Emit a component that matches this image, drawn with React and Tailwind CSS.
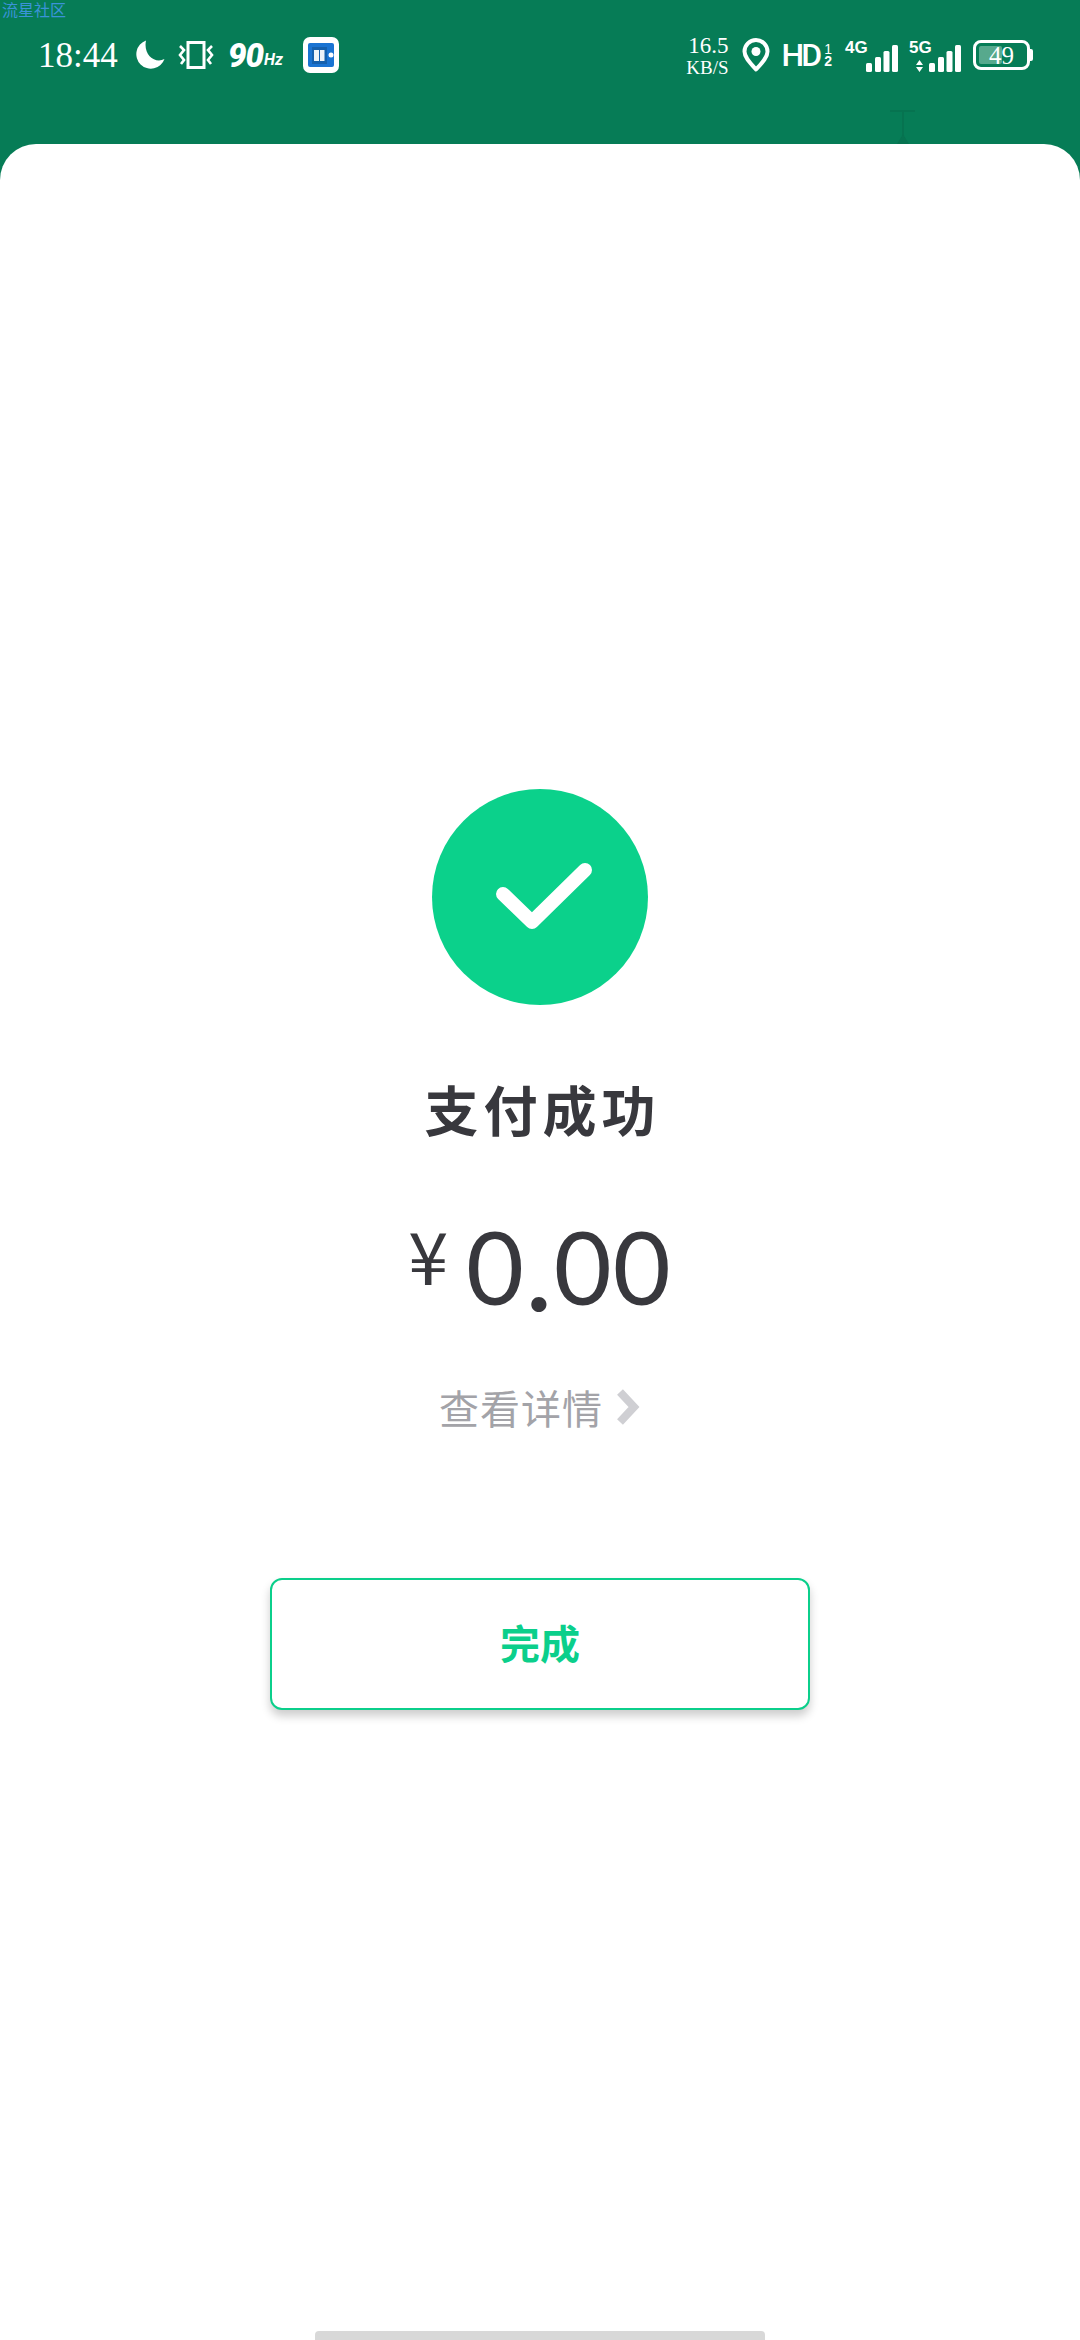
import React from 'react';

const cjk = "font-['Noto_Sans_CJK_SC',sans-serif]";

function Bars() {
  return (
    <svg width="32" height="27" viewBox="0 0 32 27" fill="#fff">
      <rect x="0" y="18" width="6" height="9" rx="1.5" />
      <rect x="9" y="12" width="6" height="15" rx="1.5" />
      <rect x="17.5" y="6" width="6" height="21" rx="1.5" />
      <rect x="26" y="0" width="6" height="27" rx="1.5" />
    </svg>
  );
}

function StatusBar() {
  return (
    <div className="flex h-[144px] shrink-0 items-start justify-between bg-[#067c56] pl-[38px] pr-[47px] pt-[37px] text-white">
      <div className="flex h-[36px] items-center">
        <span className="w-[84px] font-['Liberation_Serif',serif] text-[35px] leading-none">18:44</span>
        <svg className="ml-[13px]" width="30" height="30" viewBox="0 0 30 30" fill="#fff">
          <path d="M11 0.5A14.5 14.5 0 1 0 29.5 19C20 24 8 15 11 0.5Z" />
        </svg>
        <svg className="ml-[13px]" width="36" height="28" viewBox="0 0 36 28" fill="none" stroke="#fff">
          <rect x="10" y="1.5" width="16" height="25" strokeWidth="3" />
          <path d="M2 5l4 4-4 5 4 5-3 4M34 5l-4 4 4 5-4 5 3 4" strokeWidth="2.6" />
        </svg>
        <span className="ml-[14px] font-['Roboto',sans-serif] text-[33px] leading-none font-black tracking-[-1px] italic">90</span>
        <span className="mt-[10px] ml-[1px] font-['Roboto',sans-serif] text-[16px] leading-none font-bold italic">Hz</span>
        <svg className="ml-[20px]" width="36" height="36" viewBox="0 0 36 36">
          <rect width="36" height="36" rx="7" fill="#fff" />
          <rect x="5" y="6" width="26" height="24" rx="2" fill="#1a73d2" />
          <rect x="9" y="10" width="15" height="17" fill="#1560ad" />
          <rect x="11" y="13" width="5" height="11" fill="#eef3f8" />
          <rect x="17" y="13" width="4.5" height="11" fill="#eef3f8" />
          <circle cx="28" cy="18" r="2.5" fill="#fff" />
        </svg>
      </div>
      <div className="flex h-[36px] items-center">
        <div className="flex w-[44px] flex-col items-end font-['Liberation_Serif',serif] leading-none">
          <span className="text-[23px] leading-[20px]">16.5</span>
          <span className="mt-[4px] text-[19px] leading-[15px]">KB/S</span>
        </div>
        <svg className="ml-[13px]" width="28" height="34" viewBox="0 0 28 34" fill="none">
          <path d="M14 31.5C8 25 2.5 19.5 2.5 13.5a11.5 11.5 0 0 1 23 0C25.5 19.5 20 25 14 31.5Z" stroke="#fff" strokeWidth="4" strokeLinejoin="round" />
          <circle cx="14" cy="13.5" r="4.5" fill="#fff" />
        </svg>
        <span className="ml-[12px] font-['Roboto',sans-serif] text-[32px] leading-none font-medium tracking-[-3px]">HD</span>
        <div className="ml-[5px] flex flex-col items-center font-['Liberation_Sans',sans-serif] text-[14px] leading-[12px]">
          <span>1</span>
          <span className="font-bold">2</span>
        </div>
        <div className="relative ml-[13px] h-[30px] w-[53px]">
          <span className="absolute top-[-1px] left-0 font-['Liberation_Sans',sans-serif] text-[17px] leading-none font-bold">4G</span>
          <div className="absolute right-0 bottom-[-2px]"><Bars /></div>
        </div>
        <div className="relative ml-[11px] h-[30px] w-[52px]">
          <span className="absolute top-[-1px] left-0 font-['Liberation_Sans',sans-serif] text-[17px] leading-none font-bold">5G</span>
          <svg className="absolute bottom-[-2px] left-[7px]" width="7" height="12" viewBox="0 0 7 12" fill="#fff">
            <path d="M3.5 0L7 5H0ZM3.5 12L0 7H7Z" />
          </svg>
          <div className="absolute right-0 bottom-[-2px]"><Bars /></div>
        </div>
        <div className="ml-[12px] flex items-center">
          <div className="relative flex h-[30px] w-[57px] items-center justify-center rounded-[8px] border-[3px] border-white">
            <div className="absolute top-[3px] bottom-[3px] left-[3px] w-[23px] rounded-[2px] bg-[#57a98d]" />
            <span className="relative font-['Liberation_Serif',serif] text-[25px] leading-none">49</span>
          </div>
          <div className="h-[12px] w-[3px] rounded-r-[2px] bg-white" />
        </div>
      </div>
    </div>
  );
}

export default function App() {
  return (
    <div className="relative flex h-[2340px] w-[1080px] flex-col overflow-hidden bg-[#067c56]">
      <span className={`absolute top-0 left-[2px] text-[16px] leading-[18px] text-[#3b93d8] ${cjk}`}>流星社区</span>
      <StatusBar />
      <svg className="absolute top-[110px] left-[890px]" width="25" height="34" viewBox="0 0 25 34" fill="#067350">
        <rect x="0" y="0" width="25" height="2" />
        <rect x="12" y="0" width="2" height="34" />
        <path d="M7 34 L13 24 L19 34Z" />
      </svg>
      <main className="flex flex-1 flex-col items-center rounded-t-[36px] bg-white pt-[645px]">
        <div className="flex h-[216px] w-[216px] items-center justify-center rounded-full bg-[#0bd18b]">
          <svg className="ml-[8px]" width="100" height="72" viewBox="0 0 100 72" fill="none">
            <path d="M9 33 L38 61 L91 9" stroke="#fff" strokeWidth="14" strokeLinecap="round" strokeLinejoin="round" />
          </svg>
        </div>
        <h1 className={`mt-[72px] ml-[5px] text-[54px] leading-[64px] font-bold tracking-[5px] text-[#38383d] ${cjk}`}>支付成功</h1>
        <div className="mt-[70px] flex items-start text-[#38383d]">
          <span className={`mt-[1px] text-[72px] leading-[84px] ${cjk}`}>¥</span>
          <span className="ml-[18px] font-['Lato',sans-serif] text-[100px] leading-[110px] tracking-[1px]">
            0<span className="mx-[2px] inline-block translate-y-[6px] font-bold">.</span>00
          </span>
        </div>
        <button className="mt-[62px] flex items-center">
          <span className={`text-[40px] leading-[48px] tracking-[1px] text-[#a3a3a8] ${cjk}`}>查看详情</span>
          <svg className="ml-[12px]" width="26" height="38" viewBox="0 0 26 38" fill="none">
            <path d="M5 4 L19 19 L5 34" stroke="#cfcfd3" strokeWidth="8" />
          </svg>
        </button>
        <button className={`mt-[147px] flex h-[132px] w-[540px] items-center justify-center rounded-[12px] border-2 border-[#0bcf8b] bg-white pb-[4px] text-[40px] font-bold text-[#0bcf8b] shadow-[0_6px_10px_rgba(0,0,0,0.2)] ${cjk}`}>
          完成
        </button>
        <div className="mt-auto h-[9px] w-[450px] rounded-t-[4px] bg-[#d8d8d8]" />
      </main>
    </div>
  );
}
